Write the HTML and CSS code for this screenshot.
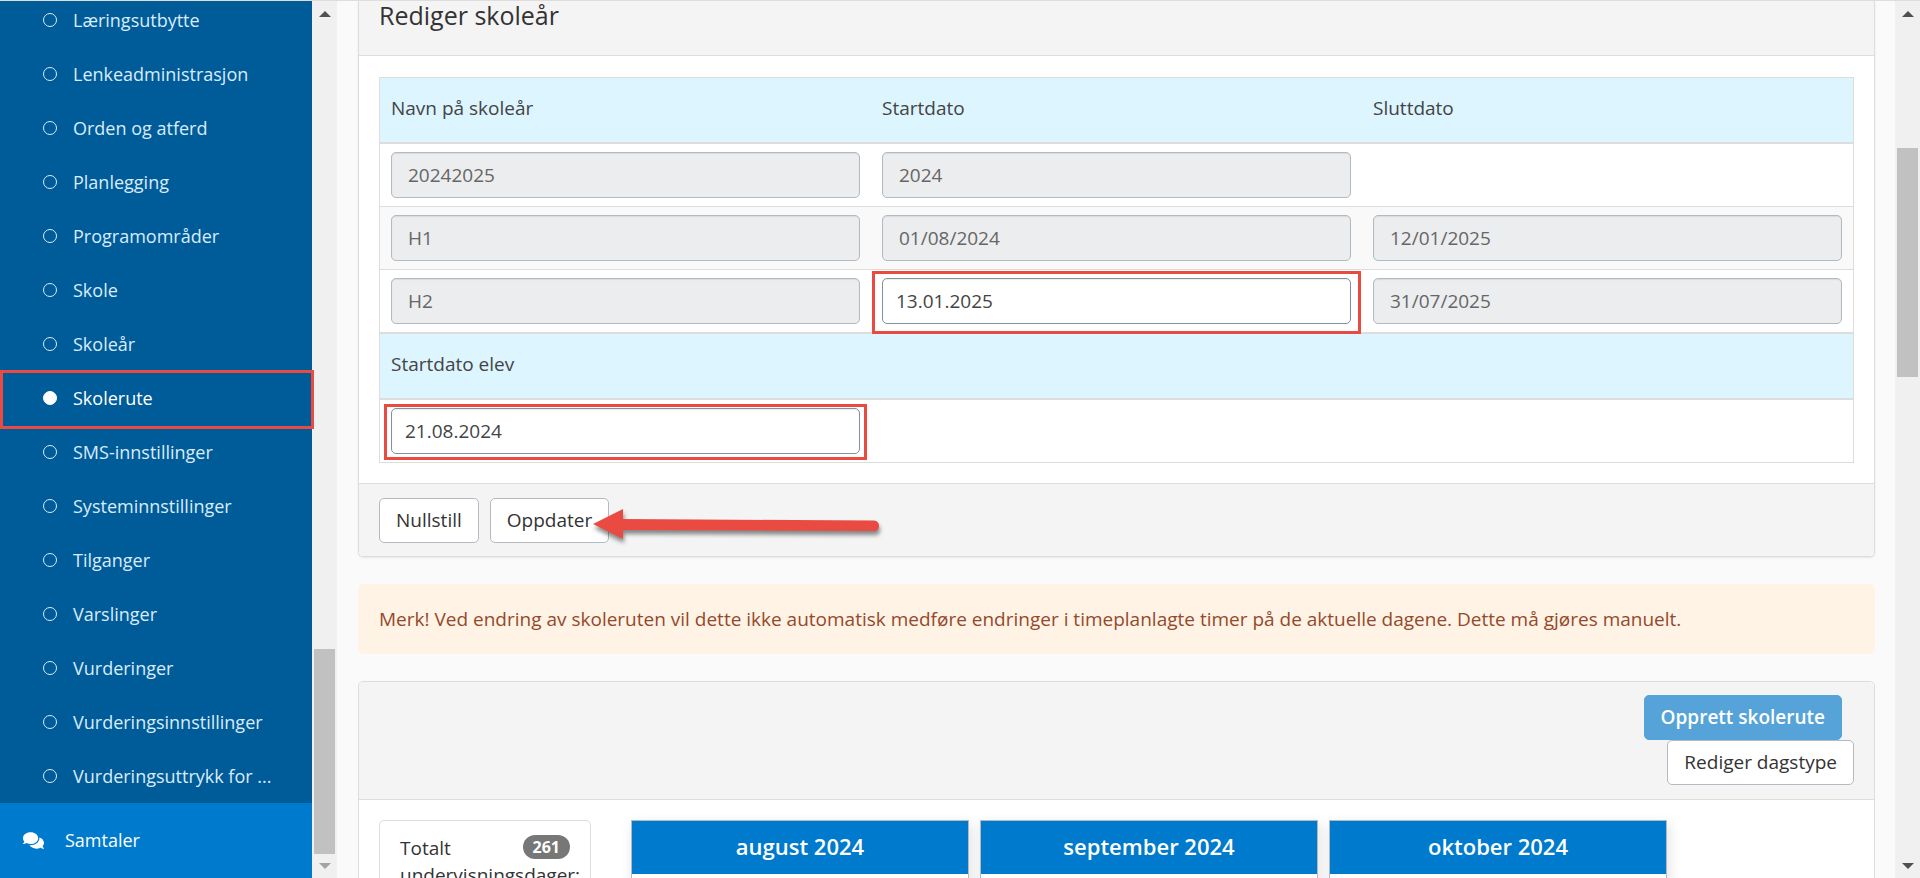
FILE: index.html
```html
<!DOCTYPE html>
<html lang="no">
<head>
    <meta charset="UTF-8">
    <meta name="viewport" content="width=device-width, initial-scale=1.0">
    <title>Skolerute</title>
    <link rel="stylesheet" href="styles.css">
</head>
<body>
    <div class="page">
        <nav class="sidebar">
            <ul class="submenu">
                <li><a href="#"><span class="dot"></span>Læringsutbytte</a></li>
                <li><a href="#"><span class="dot"></span>Lenkeadministrasjon</a></li>
                <li><a href="#"><span class="dot"></span>Orden og atferd</a></li>
                <li><a href="#"><span class="dot"></span>Planlegging</a></li>
                <li><a href="#"><span class="dot"></span>Programområder</a></li>
                <li><a href="#"><span class="dot"></span>Skole</a></li>
                <li><a href="#"><span class="dot"></span>Skoleår</a></li>
                <li class="active"><a href="#"><span class="dot"></span>Skolerute</a><span class="mark mark-menu"></span></li>
                <li><a href="#"><span class="dot"></span>SMS-innstillinger</a></li>
                <li><a href="#"><span class="dot"></span>Systeminnstillinger</a></li>
                <li><a href="#"><span class="dot"></span>Tilganger</a></li>
                <li><a href="#"><span class="dot"></span>Varslinger</a></li>
                <li><a href="#"><span class="dot"></span>Vurderinger</a></li>
                <li><a href="#"><span class="dot"></span>Vurderingsinnstillinger</a></li>
                <li><a href="#"><span class="dot"></span>Vurderingsuttrykk for ...</a></li>
            </ul>
            <a href="#" class="menu-item">
                <svg class="menu-icon" viewBox="0 0 576 512" aria-hidden="true"><path fill="currentColor" d="M416 192c0-88.400-93.100-160-208-160S0 103.600 0 192c0 34.300 14.100 65.900 38 92-13.400 30.200-35.500 54.200-35.800 54.500-2.200 2.300-2.800 5.700-1.500 8.700S4.800 352 8 352c36.600 0 66.900-12.300 88.700-25 32.200 15.700 70.300 25 111.300 25 114.900 0 208-71.600 208-160zm122 220c23.900-26 38-57.700 38-92 0-66.900-53.500-124.200-129.300-148.100.9 6.600 1.300 13.300 1.300 20.100 0 105.900-107.700 192-240 192-10.800 0-21.300-.8-31.700-1.900C207.800 439.600 281.800 480 368 480c41 0 79.100-9.200 111.300-25 21.800 12.700 52.100 25 88.700 25 3.200 0 6.100-1.900 7.300-4.800 1.300-2.900.7-6.300-1.500-8.700-.3-.3-22.400-24.200-35.800-54.500z"/></svg>
                Samtaler
            </a>
        </nav>
        <div class="scrollbar scrollbar-side">
            <span class="arrow-up"></span>
            <div class="track"><div class="thumb"></div></div>
            <span class="arrow-down"></span>
        </div>

        <main class="content">
            <form class="card card-edit">
                <div class="card-header">
                    <h2>Rediger skoleår</h2>
                </div>
                <div class="card-body">
                    <table class="table">
                        <thead>
                            <tr><th>Navn på skoleår</th><th>Startdato</th><th>Sluttdato</th></tr>
                        </thead>
                        <tbody>
                            <tr>
                                <td><input type="text" class="form-control" aria-label="Navn på skoleår" value="20242025" disabled></td>
                                <td><input type="text" class="form-control" aria-label="Startår" value="2024" disabled></td>
                                <td></td>
                            </tr>
                            <tr>
                                <td><input type="text" class="form-control" aria-label="Termin 1" value="H1" disabled></td>
                                <td><input type="text" class="form-control" aria-label="Startdato H1" value="01/08/2024" disabled></td>
                                <td><input type="text" class="form-control" aria-label="Sluttdato H1" value="12/01/2025" disabled></td>
                            </tr>
                            <tr>
                                <td><input type="text" class="form-control" aria-label="Termin 2" value="H2" disabled></td>
                                <td>
                                    <div class="field">
                                        <input type="text" class="form-control" aria-label="Startdato H2" value="13.01.2025">
                                        <span class="mark mark-start"></span>
                                    </div>
                                </td>
                                <td><input type="text" class="form-control" aria-label="Sluttdato H2" value="31/07/2025" disabled></td>
                            </tr>
                        </tbody>
                    </table>
                    <table class="table">
                        <thead>
                            <tr><th><label for="startElev">Startdato elev</label></th><th></th><th></th></tr>
                        </thead>
                        <tbody>
                            <tr>
                                <td>
                                    <div class="field">
                                        <input type="text" class="form-control" id="startElev" value="21.08.2024">
                                        <span class="mark mark-pupil"></span>
                                    </div>
                                </td>
                                <td></td>
                                <td></td>
                            </tr>
                        </tbody>
                    </table>
                </div>
                <div class="card-footer">
                    <button type="reset" class="btn">Nullstill</button>
                    <div class="field">
                        <button type="button" class="btn">Oppdater</button>
                        <svg class="pointer" width="296" height="44" viewBox="0 0 296 44" aria-hidden="true">
                            <path fill="#e94b43" d="M3 19 L33 4 V14 L284 15.500 Q289 16 289 21 Q289 26 284 26 L33 25 V34 Z"/>
                        </svg>
                    </div>
                </div>
            </form>

            <div class="alert">Merk! Ved endring av skoleruten vil dette ikke automatisk medføre endringer i timeplanlagte timer på de aktuelle dagene. Dette må gjøres manuelt.</div>

            <section class="card card-plan">
                <div class="plan-header">
                    <button type="button" class="btn btn-primary">Opprett skolerute</button>
                    <button type="button" class="btn">Rediger dagstype</button>
                </div>
                <div class="plan-body">
                    <div class="summary">
                        <div class="summary-row"><span>Totalt</span><span class="badge">261</span></div>
                        <span>undervisningsdager:</span>
                    </div>
                    <div class="months">
                        <div class="month"><h3>august 2024</h3></div>
                        <div class="month"><h3>september 2024</h3></div>
                        <div class="month"><h3>oktober 2024</h3></div>
                    </div>
                </div>
            </section>
        </main>
        <div class="scrollbar scrollbar-page">
            <span class="arrow-up"></span>
            <div class="track"><div class="thumb"></div></div>
            <span class="arrow-down"></span>
        </div>
    </div>
</body>
</html>
```
FILE: styles.css
```css
* {
    box-sizing: border-box;
}
body {
    margin: 0;
    font-family: "Open Sans", sans-serif;
    font-size: 19px;
    line-height: 27px;
    color: #333;
    background: #fafafa;
}
.page {
    display: flex;
    height: 100vh;
    overflow: hidden;
    border-top: 1px solid #ddd;
}

/* Sidemeny */
.sidebar {
    width: 312px;
    flex: none;
    background: #007acc;
}
.submenu {
    list-style: none;
    margin: -8px 0 0;
    padding: 0;
    background: #005b99;
}
.submenu li {
    position: relative;
}
.submenu a {
    display: flex;
    align-items: center;
    gap: 16px;
    height: 54px;
    padding-left: 43px;
    font-size: 18px;
    color: #d9ecf9;
    text-decoration: none;
}
.dot {
    width: 14px;
    height: 14px;
    border: 1px solid #d9ecf9;
    border-radius: 50%;
}
.submenu .active a {
    color: #fff;
}
.active .dot {
    background: #fff;
    border-color: #fff;
}
.menu-item {
    display: flex;
    align-items: center;
    gap: 21px;
    height: 75px;
    padding-left: 23px;
    font-size: 18px;
    color: #fff;
    text-decoration: none;
}
.menu-icon {
    width: 21px;
    height: 19px;
}

/* Rullefelt */
.scrollbar {
    display: flex;
    flex-direction: column;
    align-items: center;
    width: 25px;
    flex: none;
    padding: 10px 0 9px;
    background: #f0f0f0;
}
.arrow-up, .arrow-down {
    border: 6px solid transparent;
}
.arrow-up {
    border-top: 0;
    border-bottom-color: #505050;
}
.arrow-down {
    border-bottom: 0;
    border-top-color: #505050;
}
.track {
    display: grid;
    flex: 1;
    width: 21px;
    margin: 9px 0;
}
.thumb {
    grid-row: 2;
    background: #c1c1c1;
}
.scrollbar-side .track {
    grid-template-rows: 623fr 205fr;
}
.scrollbar-side .arrow-down {
    border-top-color: #a3a3a3;
}
.scrollbar-page .track {
    grid-template-rows: 122fr 229fr 477fr;
}

/* Innhold */
.content {
    flex: 1;
    min-width: 0;
    padding: 0 20px 0 21px;
}
.card {
    background: #fff;
    border: 1px solid #ddd;
    border-radius: 5px;
}
.card-edit {
    border-top: 0;
    border-radius: 0 0 5px 5px;
    box-shadow: 0 1px 2px rgba(0,0,0,0.08);
}
.card-header {
    padding: 0 20px 26px;
    background: #f4f4f4;
    border-bottom: 1px solid #ddd;
}
.card-header h2 {
    margin: 0;
    font-size: 25px;
    font-weight: 400;
    line-height: 28px;
}
.card-body {
    padding: 21px 20px 20px;
}
.table {
    width: 100%;
    table-layout: fixed;
    border-collapse: separate;
    border-spacing: 0;
    border: 1px solid #ddd;
}
.table th {
    padding: 17px 11px 20px;
    font-weight: 400;
    text-align: left;
    color: #444;
    background: #dcf5ff;
    border-bottom: 2px solid #ddd;
}
.table td {
    padding: 8px 11px;
}
.table tr + tr td {
    border-top: 1px solid #ddd;
}
.table tbody tr:nth-child(even) {
    background: #f9f9f9;
}
.form-control {
    display: block;
    width: 100%;
    height: 46px;
    padding: 0 13px;
    border: 1px solid #8290a0;
    border-radius: 5px;
    background: #fff;
    box-shadow: inset 0 1px 1px rgba(0,0,0,0.08);
    font: inherit;
    color: #444;
}
.form-control:disabled {
    padding: 0 16px;
    background: #ebedef;
    border-color: #b3bac2;
    color: #666;
}
.card-footer {
    display: flex;
    gap: 11px;
    padding: 14px 20px 13px;
    background: #f4f4f4;
    border-top: 1px solid #ddd;
    border-radius: 0 0 5px 5px;
}
.btn {
    display: block;
    height: 45px;
    padding: 0 16px;
    border: 1px solid #b3bac2;
    border-radius: 5px;
    background: #fff;
    font: inherit;
    color: #333;
}
.btn-primary {
    margin-right: 12px;
    background: #55a3d8;
    border-color: #55a3d8;
    color: #fff;
    font-weight: 600;
}
.alert {
    margin: 27px 0;
    padding: 21px;
    border-radius: 5px;
    background: #fff3e6;
    color: #94492a;
    line-height: 28px;
}
.plan-header {
    display: flex;
    flex-direction: column;
    align-items: flex-end;
    padding: 13px 20px 14px;
    background: #f4f4f4;
    border-bottom: 1px solid #ddd;
    border-radius: 5px 5px 0 0;
}
.plan-body {
    display: flex;
    gap: 40px;
    padding: 20px;
}
.summary {
    width: 212px;
    height: 110px;
    padding: 14px 20px;
    border: 1px solid #ddd;
    border-radius: 5px;
}
.summary-row {
    display: flex;
    justify-content: space-between;
    align-items: flex-start;
}
.badge {
    padding: 0 10px;
    border-radius: 12px;
    background: #777;
    color: #fff;
    font-size: 16px;
    font-weight: 700;
    line-height: 24px;
}
.months {
    display: flex;
    gap: 11px;
}
.month {
    width: 338px;
    height: 300px;
    border: 1px solid #b3bac2;
    background: #fff;
    box-shadow: 2px 4px 12px rgba(0,0,0,0.12);
}
.month h3 {
    margin: 0;
    padding-bottom: 2px;
    background: #007acc;
    color: #fff;
    font-size: 22px;
    font-weight: 600;
    line-height: 51px;
    text-align: center;
}

/* Røde markeringer */
.field {
    position: relative;
}
.mark {
    position: absolute;
    border: 3px solid #e94b43;
    pointer-events: none;
}
.mark-menu {
    inset: -1px -2px -4px 0;
    z-index: 1;
}
.mark-start {
    inset: -7px -10px -10px;
}
.mark-pupil {
    inset: -4px -7px -6px;
}
.pointer {
    position: absolute;
    top: 7px;
    left: 100px;
    filter: drop-shadow(1px 4px 2px rgba(0,0,0,0.45));
    pointer-events: none;
}
```
